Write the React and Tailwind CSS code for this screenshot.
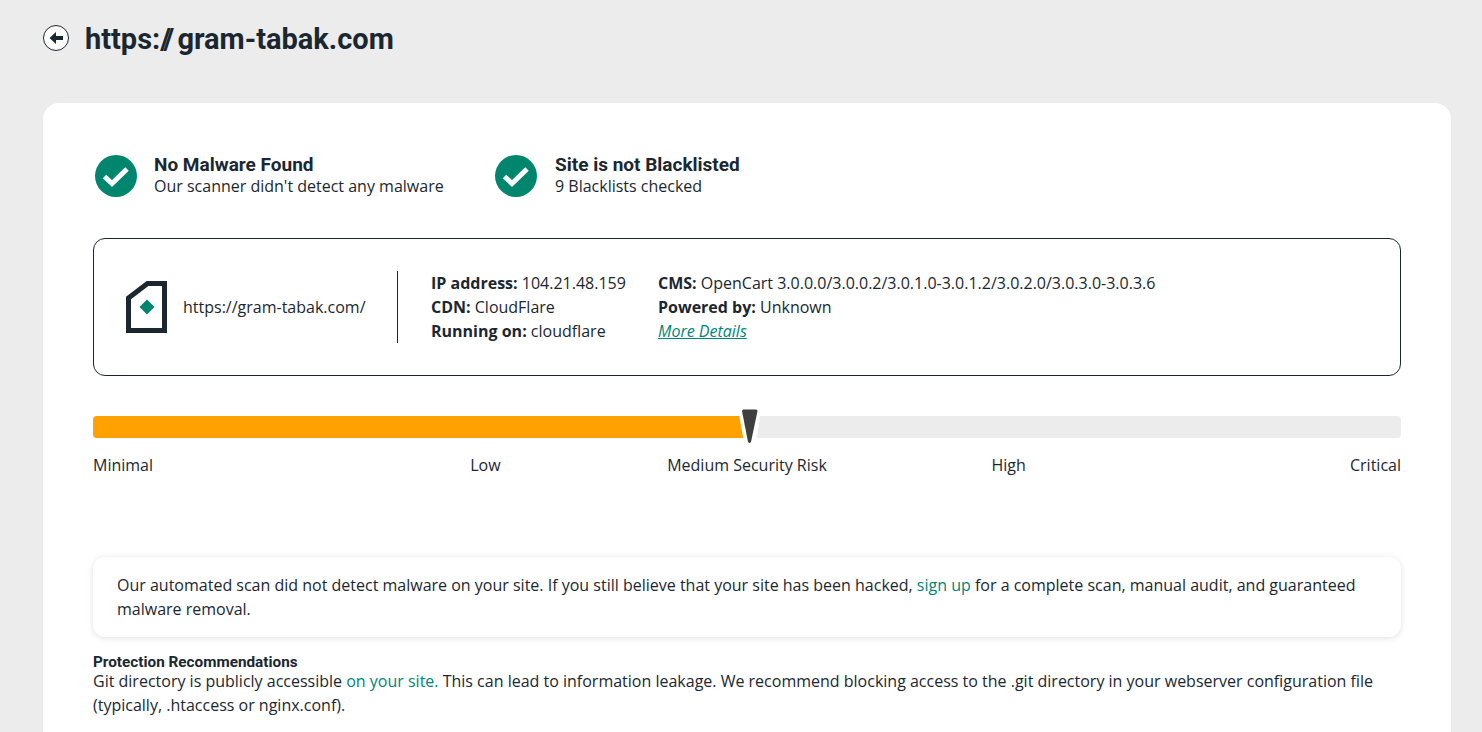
import React from 'react';

const CheckBadge = () => (
  <svg viewBox="0 0 42 42" className="h-[42px] w-[42px] shrink-0">
    <circle cx="21" cy="21" r="21" fill="#00866e" />
    <path d="M9.500 21.500l7.500 7L32 14" fill="none" stroke="#fff" strokeWidth="5" />
  </svg>
);

const Status = ({ title, text, className }) => (
  <div className={`flex items-center ${className}`}>
    <CheckBadge />
    <div className="-mt-[2px]">
      <div className="font-['Roboto',sans-serif] text-[19px] leading-[22px] font-bold text-[#1b2730]">{title}</div>
      <div className="text-[16px] leading-[20px]">{text}</div>
    </div>
  </div>
);

const Label = ({ name, value }) => (
  <div>
    <span className="font-bold">{name}</span> {value}
  </div>
);

export default function App() {
  return (
    <div className="h-[732px] overflow-hidden bg-[#ececec] px-[31px] font-['Open_Sans',sans-serif] text-[16px] leading-[24px] text-[#1b2730]">
      <div className="ml-[12px] flex h-[103px] items-start pt-[25px]">
        <svg viewBox="0 0 26 26" className="h-[26px] w-[26px] shrink-0">
          <circle cx="13" cy="13" r="12.500" fill="#fff" stroke="#1b2730" />
          <path d="M6.500 13l6.500-6v4h7v4h-7v4z" fill="#1b2730" />
        </svg>
        <h1 className="ml-[16px] font-['Roboto',sans-serif] text-[29px] leading-[28px] font-bold text-[#1b2730]">
          https:<span className="tracking-[-4px]">//</span><span className="ml-[7px]">gram-tabak.com</span>
        </h1>
      </div>

      <div className="ml-[12px] w-[1408px] rounded-t-[16px] bg-white px-[50px] pt-[52px] pb-[40px]">
        <div className="flex pl-[2px]">
          <Status title="No Malware Found" text="Our scanner didn't detect any malware" className="w-[400px] gap-[17px]" />
          <Status title="Site is not Blacklisted" text="9 Blacklists checked" className="gap-[18px]" />
        </div>

        <div className="mt-[41px] flex h-[138px] items-center rounded-[12px] border border-[#1b2730] pl-[32px]">
          <svg viewBox="0 0 41 52" className="h-[52px] w-[41px] shrink-0">
            <path d="M38.500 2.500H21.500L2.500 17v32.500H38.500z" fill="none" stroke="#1b2730" strokeWidth="5" />
            <path d="M21 18.500l7.500 7.500-7.500 7.500-7.500-7.500z" fill="#00866e" />
          </svg>
          <div className="ml-[16px] w-[214px]">https://gram-tabak.com/</div>
          <div className="h-[72px] w-px bg-[#1b2730]" />
          <div className="ml-[33px] w-[227px]">
            <Label name="IP address:" value="104.21.48.159" />
            <Label name="CDN:" value="CloudFlare" />
            <Label name="Running on:" value="cloudflare" />
          </div>
          <div>
            <Label name="CMS:" value="OpenCart 3.0.0.0/3.0.0.2/3.0.1.0-3.0.1.2/3.0.2.0/3.0.3.0-3.0.3.6" />
            <Label name="Powered by:" value="Unknown" />
            <a className="text-[#008577] italic underline">More Details</a>
          </div>
        </div>

        <div className="relative mt-[40px] h-[22px] rounded-[4px] bg-[#ececec]">
          <div className="h-full w-[652px] rounded-l-[4px] bg-[#ffa100]" />
          <svg viewBox="0 0 24 36" className="absolute top-[-7px] left-[645px] h-[36px] w-[24px]">
            <path d="M0 0H23L18 36H6.500z" fill="#fff" />
            <path d="M4 2q0-1.500 1.500-1.500h12.500q1.500 0 1.500 1.500L13 33q-1.500 2-3 0z" fill="#3f3f3f" />
          </svg>
        </div>

        <div className="mt-[15px] grid grid-cols-5 text-[#1b2730]">
          <div>Minimal</div>
          <div className="text-center">Low</div>
          <div className="text-center">Medium Security Risk</div>
          <div className="text-center">High</div>
          <div className="text-right">Critical</div>
        </div>

        <div className="mt-[80px] rounded-[12px] bg-white px-[24px] py-[16px] shadow-[0_1px_6px_rgba(0,0,0,0.12)]">
          Our automated scan did not detect malware on your site. If you still believe that your site has been hacked,{' '}
          <a className="text-[#008577]">sign up</a> for a complete scan, manual audit, and guaranteed malware removal.
        </div>

        <div className="mt-[18px] font-['Roboto',sans-serif] text-[15.300px] leading-[14px] font-bold">Protection Recommendations</div>
        <div>
          Git directory is publicly accessible <a className="text-[#008577]">on your site.</a> This can lead to information
          leakage. We recommend blocking access to the .git directory in your webserver configuration file (typically,
          .htaccess or nginx.conf).
        </div>
      </div>
    </div>
  );
}
